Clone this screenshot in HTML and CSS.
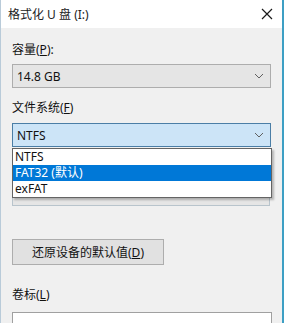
FILE: index.html
```html
<!DOCTYPE html>
<html lang="zh-CN">
  <head>
    <meta charset="utf-8" />
    <title>格式化 U 盘 (I:)</title>
    <link rel="stylesheet" href="styles.css">
  </head>
  <body>
    <div class="window">
      <div class="title-bar">
        <span class="title">格式化 U 盘 (I:)</span>
        <svg class="close" width="12" height="12" viewBox="0 0 12 12">
          <path d="M1 1 L11 11 M11 1 L1 11" stroke="#1a1a1a" stroke-width="1.2" fill="none" />
        </svg>
      </div>
      <div class="content">
        <div class="label first">容量(<u>P</u>):</div>
        <div class="combo">
          <span>14.8 GB</span>
          <svg class="chevron" width="10" height="6" viewBox="0 0 10 6">
            <path d="M1 1 L5 5 L9 1" stroke="#606060" stroke-width="1" fill="none" />
          </svg>
        </div>

        <div class="label">文件系统(<u>F</u>)</div>
        <div class="combo-wrap">
          <div class="combo active">
            <span>NTFS</span>
            <svg class="chevron" width="10" height="6" viewBox="0 0 10 6">
              <path d="M1 1 L5 5 L9 1" stroke="#606060" stroke-width="1" fill="none" />
            </svg>
          </div>
          <!-- open dropdown list -->
          <ul class="dropdown">
            <li>NTFS</li>
            <li class="selected">FAT32 (默认)</li>
            <li>exFAT</li>
          </ul>
        </div>

        <!-- allocation size field, hidden under the list -->
        <div class="label spacer"></div>
        <div class="combo covered"></div>

        <button class="reset-btn">还原设备的默认值(<u>D</u>)</button>

        <div class="label volume">卷标(<u>L</u>)</div>
        <input class="text-input" type="text" />
      </div>
    </div>
  </body>
</html>
```

FILE: styles.css
```css
body {
  margin: 0;
  font-family: "Noto Sans", "Noto Sans CJK SC", sans-serif;
  font-size: 12px;
  color: #111;
  background: #f0f0f0;
}
.window {
  width: 284px;
  height: 323px;
  box-sizing: border-box;
  border-left: 1px solid #b9cbd9;
  border-right: 2px solid #3d9fc4;
  background: #f0f0f0;
  overflow: hidden;
}
.title-bar {
  height: 28px;
  background: #fff;
  display: flex;
  align-items: center;
  justify-content: space-between;
  padding: 0 9px 0 7px;
}
.title {
  font-size: 12px;
  color: #222;
}
.close {
  display: block;
}
.content {
  padding: 0 11px;
}
.label {
  height: 16px;
  line-height: 16px;
  margin-top: 12px;
  margin-bottom: 7px;
}
.label.first {
  margin-top: 14px;
  margin-bottom: 6px;
}
.label.volume {
  margin-top: 22px;
  margin-bottom: 9px;
}
.combo {
  height: 24px;
  box-sizing: border-box;
  border: 1px solid #adadad;
  background: #e5e5e5;
  display: flex;
  align-items: center;
  justify-content: space-between;
  padding: 0 6px 0 4px;
}
.combo.active {
  background: #cce4f7;
  border-color: #4b7ea6;
}
.combo.covered {
  width: 258px;
  border-color: #b8c4cc;
}
.combo-wrap {
  position: relative;
}
.dropdown {
  position: absolute;
  top: 25px;
  left: 0;
  width: 258px;
  margin: 0;
  padding: 0;
  list-style: none;
  background: #fff;
  border: 1px solid #646464;
  box-shadow: 2px 2px 2px rgba(0, 0, 0, 0.25);
  z-index: 10;
}
.dropdown li {
  height: 16px;
  line-height: 16px;
  padding-left: 2px;
}
.dropdown li.selected {
  background: #0078d7;
  color: #fff;
}
.reset-btn {
  display: block;
  margin-top: 33px;
  width: 152px;
  height: 26px;
  font-family: inherit;
  font-size: 12px;
  color: #111;
  background: #e1e1e1;
  border: 1px solid #adadad;
  padding: 0;
}
.text-input {
  display: block;
  width: 260px;
  height: 24px;
  box-sizing: border-box;
  border: 1px solid #a0a0a0;
  background: #fff;
  margin: 0;
}
```
